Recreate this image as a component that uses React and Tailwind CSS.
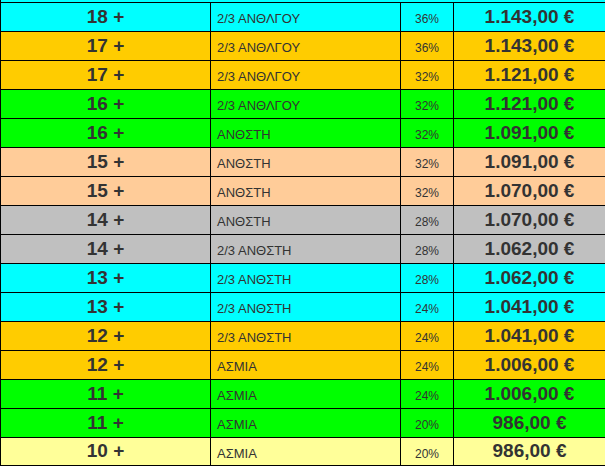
const rows = [
    { age: '18 +', bg: 'bg-[#00ffff]', type: '2/3 ΑΝΘΛΓΟΥ', pct: '36%', price: '1.143,00 €' },
    { age: '17 +', bg: 'bg-[#ffcc00]', type: '2/3 ΑΝΘΛΓΟΥ', pct: '36%', price: '1.143,00 €' },
    { age: '17 +', bg: 'bg-[#ffcc00]', type: '2/3 ΑΝΘΛΓΟΥ', pct: '32%', price: '1.121,00 €' },
    { age: '16 +', bg: 'bg-[#00ff00]', type: '2/3 ΑΝΘΛΓΟΥ', pct: '32%', price: '1.121,00 €' },
    { age: '16 +', bg: 'bg-[#00ff00]', type: 'ΑΝΘΣΤΗ', pct: '32%', price: '1.091,00 €' },
    { age: '15 +', bg: 'bg-[#ffcc99]', type: 'ΑΝΘΣΤΗ', pct: '32%', price: '1.091,00 €' },
    { age: '15 +', bg: 'bg-[#ffcc99]', type: 'ΑΝΘΣΤΗ', pct: '32%', price: '1.070,00 €' },
    { age: '14 +', bg: 'bg-[#c0c0c0]', type: 'ΑΝΘΣΤΗ', pct: '28%', price: '1.070,00 €' },
    { age: '14 +', bg: 'bg-[#c0c0c0]', type: '2/3 ΑΝΘΣΤΗ', pct: '28%', price: '1.062,00 €' },
    { age: '13 +', bg: 'bg-[#00ffff]', type: '2/3 ΑΝΘΣΤΗ', pct: '28%', price: '1.062,00 €' },
    { age: '13 +', bg: 'bg-[#00ffff]', type: '2/3 ΑΝΘΣΤΗ', pct: '24%', price: '1.041,00 €' },
    { age: '12 +', bg: 'bg-[#ffcc00]', type: '2/3 ΑΝΘΣΤΗ', pct: '24%', price: '1.041,00 €' },
    { age: '12 +', bg: 'bg-[#ffcc00]', type: 'ΑΣΜΙΑ', pct: '24%', price: '1.006,00 €' },
    { age: '11 +', bg: 'bg-[#00ff00]', type: 'ΑΣΜΙΑ', pct: '24%', price: '1.006,00 €' },
    { age: '11 +', bg: 'bg-[#00ff00]', type: 'ΑΣΜΙΑ', pct: '20%', price: '986,00 €' },
    { age: '10 +', bg: 'bg-[#ffff99]', type: 'ΑΣΜΙΑ', pct: '20%', price: '986,00 €' },
]

const Row = ({ row, last }) => (
    <div className={`flex border-b border-l border-black ${row.bg} ${last ? 'h-[28px]' : 'h-[29px]'}`}>
        <div className="w-[210px] shrink-0 border-r border-black flex items-center justify-center text-[19px] font-bold">
            {row.age}
        </div>
        <div className="w-[190px] shrink-0 border-r border-black flex items-center pl-[6px] pt-[4px] text-[13px]">
            {row.type}
        </div>
        <div className="w-[53px] shrink-0 border-r border-black flex items-center justify-center pt-[4px] text-[12px]">
            {row.pct}
        </div>
        <div className="flex-1 flex items-center justify-center text-[19px] font-bold">
            {row.price}
        </div>
    </div>
)

export default function App() {
    return (
        <div className="w-[605px] h-[467px] overflow-hidden bg-white text-[#333] font-['Liberation_Sans',Arial,sans-serif]">
            {/* previous row, scrolled mostly out of view */}
            <div className="-mt-[26px] h-[29px] bg-[#00ffff] border-b border-l border-black" />
            {rows.map((row, i) => (
                <Row key={i} row={row} last={i === rows.length - 1} />
            ))}
        </div>
    )
}
